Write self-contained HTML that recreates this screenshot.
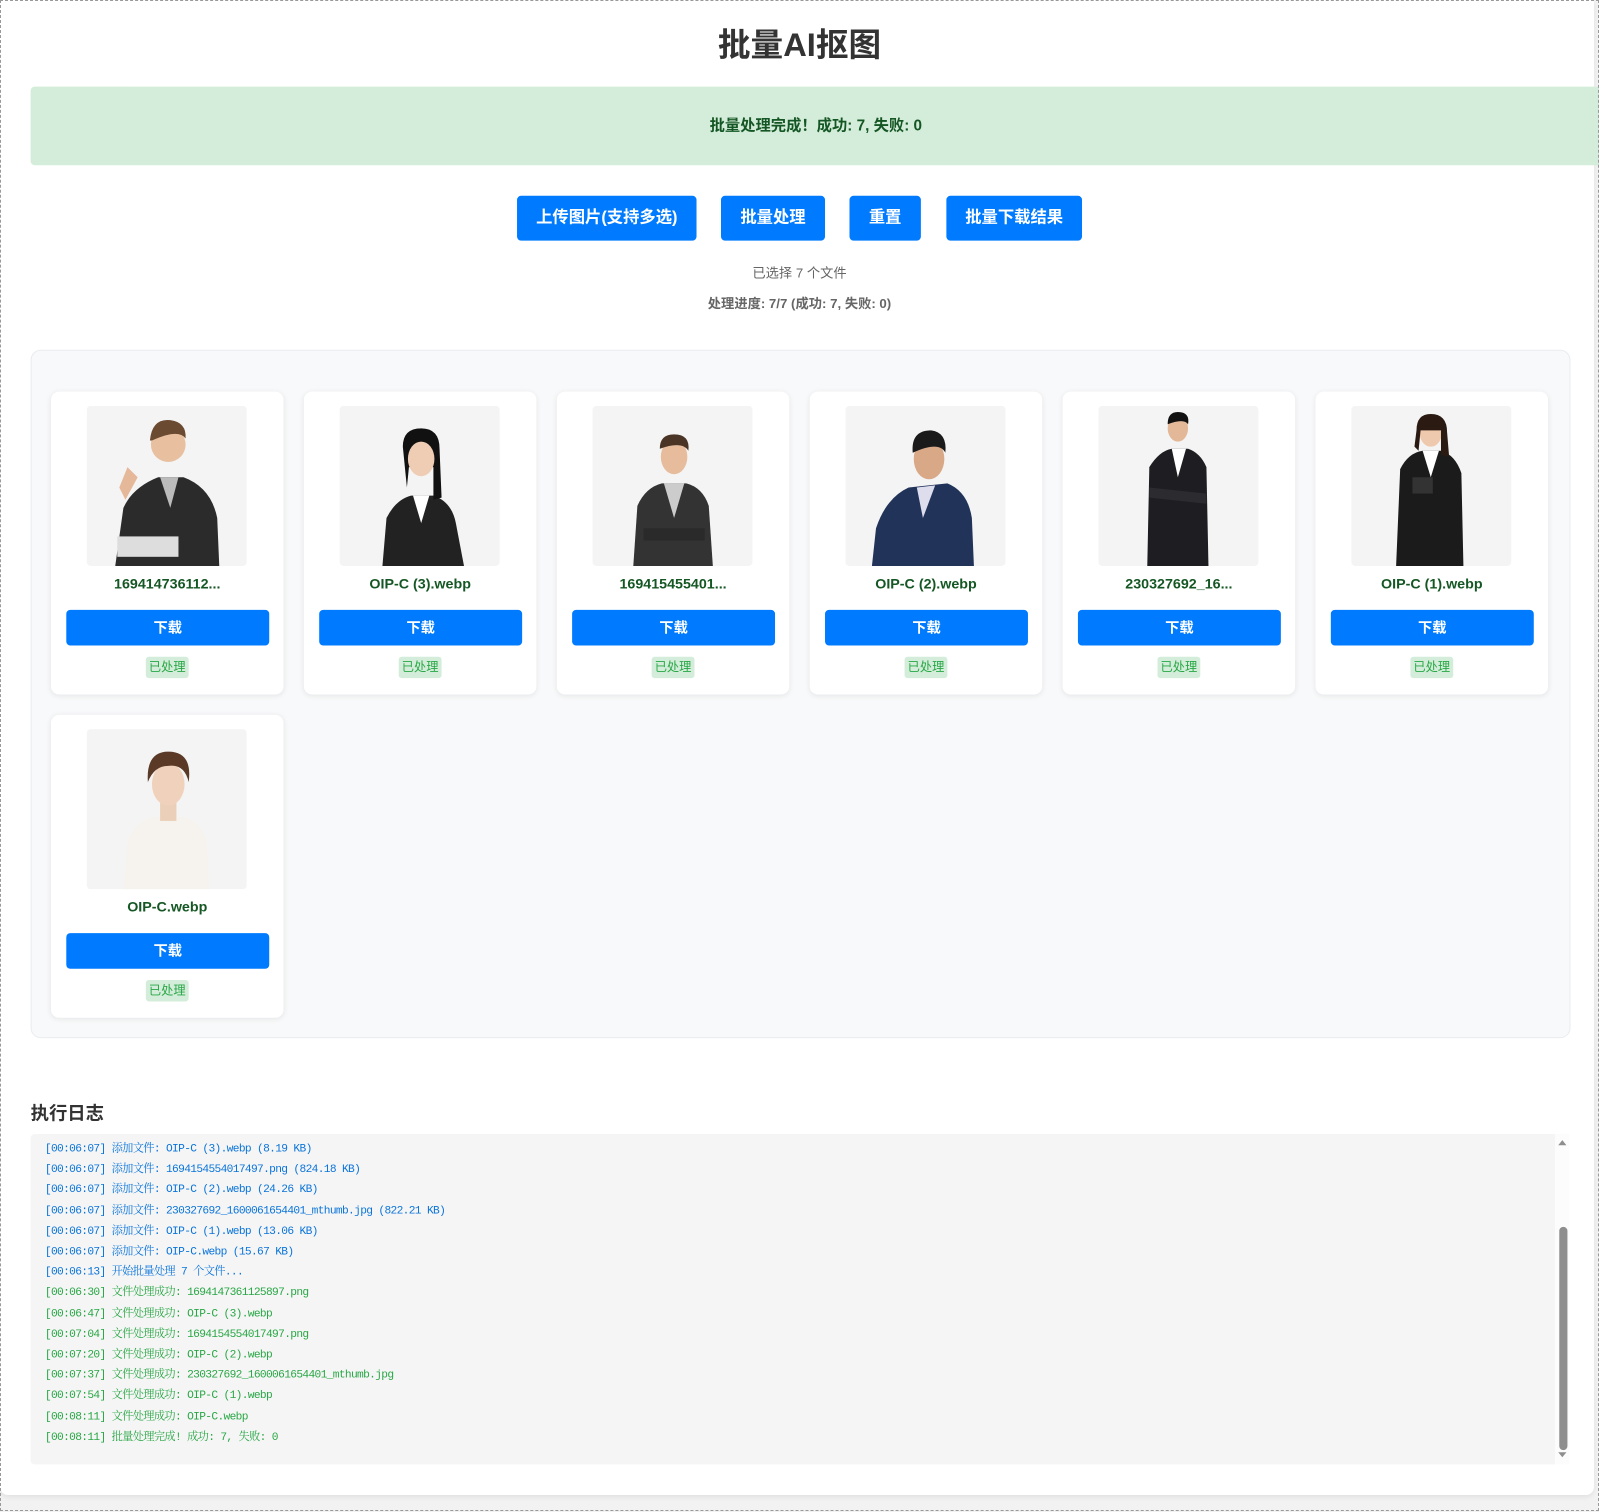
<!DOCTYPE html>
<html><head><meta charset="utf-8"><style>
*{box-sizing:border-box;margin:0;padding:0}
body{width:1599px;height:1512px;background:#f2f2f2;font-family:"Liberation Sans","Noto Sans CJK SC",sans-serif;position:relative;overflow:hidden}
.frame{position:absolute;left:0;top:0;width:1599px;height:1511px;border:1px dashed #999;pointer-events:none;z-index:5}
.page{position:absolute;left:0;top:0;width:1594px;height:1495px;background:#fff;border-radius:0 0 8px 8px;box-shadow:0 2px 6px rgba(0,0,0,.08)}
.wrap{position:absolute;left:0;top:0;width:1568px;height:1482px;transform:scale(1.0198);transform-origin:0 0}
h1{position:absolute;left:0;width:1568px;top:24px;text-align:center;font-size:32px;font-weight:bold;color:#333;line-height:40px}
.banner{position:absolute;left:30px;top:85px;width:1540px;height:77px;background:#d4edda;border-radius:4px 0 0 4px;text-align:center;line-height:77px;font-size:15px;font-weight:bold;color:#155724}
.btn{position:absolute;top:192px;height:44px;background:#007bff;color:#fff;border-radius:4px;font-size:16px;font-weight:bold;text-align:center;line-height:44px}
.info{position:absolute;left:0;width:1568px;text-align:center;font-size:13px;color:#666}
.grid{position:absolute;left:30px;top:343px;width:1510px;height:675px;background:#f8f9fa;border:1px solid #e9ecef;border-radius:10px}
.card{position:absolute;width:228px;height:297px;background:#fff;border-radius:8px;box-shadow:0 1px 5px rgba(0,0,0,.08)}
.card svg{position:absolute;left:35px;top:14px;width:157px;height:157px;border-radius:4px}
.card .nm{position:absolute;left:0;width:228px;top:180px;text-align:center;font-size:14px;font-weight:bold;color:#155724}
.card .dl{position:absolute;left:15px;top:214px;width:199px;height:35px;background:#007bff;border-radius:4px;color:#fff;text-align:center;line-height:35px;font-size:14px;font-weight:bold}
.card .bd{position:absolute;left:93px;top:260px;width:42px;height:21px;background:#d4edda;border-radius:3px;color:#28a745;font-size:12px;text-align:center;line-height:21px}
h2{position:absolute;left:30px;top:1078px;font-size:18px;font-weight:bold;color:#333}
.log{position:absolute;left:30px;top:1112px;width:1495px;height:324px;background:#f5f5f5;border-radius:4px 0 0 4px;padding:5px 14px;font-family:"Liberation Mono","Noto Serif CJK SC",monospace;font-size:11px;line-height:20.2px;letter-spacing:-0.65px}
.log .b{color:#0a74da}.log .g{color:#28a745}
.sb{position:absolute;left:1525px;top:1112px;width:14px;height:324px;background:#fcfcfc}
.thumb{position:absolute;left:1529px;top:1203px;width:8px;height:219px;background:#8e8e8e;border-radius:4px}
</style></head><body>
<div class="page"></div>
<div class="wrap">
<h1>批量AI抠图</h1>
<div class="banner">批量处理完成！成功: 7, 失败: 0</div>
<div class="btn" style="left:507px;width:176px">上传图片(支持多选)</div>
<div class="btn" style="left:707px;width:102px">批量处理</div>
<div class="btn" style="left:833px;width:70px">重置</div>
<div class="btn" style="left:928px;width:133px">批量下载结果</div>
<div class="info" style="top:257px">已选择 7 个文件</div>
<div class="info" style="top:287px;font-weight:bold">处理进度: 7/7 (成功: 7, 失败: 0)</div>
<div class="grid"></div>

<div class="card" style="left:50px;top:384px"><svg viewBox="0 0 157 157"><rect width="157" height="157" fill="#f4f4f4"/><path d="M28 157 L36 100 Q45 80 70 70 L95 70 Q122 80 128 110 L130 157Z" fill="#2b2b2b"/><rect x="30" y="128" width="60" height="20" fill="#ddd"/><path d="M40 60 L32 80 L38 92 L50 70Z" fill="#e4b898"/><path d="M72 70 L82 100 L90 70Z" fill="#bbb"/><circle cx="80" cy="38" r="17" fill="#e8c0a0"/><path d="M62 34 Q64 12 82 14 Q98 16 97 32 Q90 22 64 34Z" fill="#6b4a32"/></svg><div class="nm">169414736112...</div><div class="dl">下载</div><div class="bd">已处理</div></div>

<div class="card" style="left:298px;top:384px"><svg viewBox="0 0 157 157"><rect width="157" height="157" fill="#f4f4f4"/><path d="M42 157 L46 110 Q55 92 70 88 L92 88 Q110 94 114 115 L122 157Z" fill="#222"/><path d="M72 88 L80 115 L88 88Z" fill="#fff"/><path d="M62 40 Q62 22 80 22 Q98 22 98 42 L100 90 L92 92 L92 60 L68 60 L66 80Z" fill="#111"/><ellipse cx="80" cy="52" rx="13" ry="17" fill="#efcdb4"/></svg><div class="nm">OIP-C (3).webp</div><div class="dl">下载</div><div class="bd">已处理</div></div>

<div class="card" style="left:546px;top:384px"><svg viewBox="0 0 157 157"><rect width="157" height="157" fill="#f4f4f4"/><path d="M40 157 L44 98 Q52 80 68 76 L92 76 Q108 80 114 98 L118 157Z" fill="#333"/><path d="M70 76 L80 110 L90 76Z" fill="#ccc"/><path d="M50 120 L110 120 L110 132 L50 132Z" fill="#2a2a2a"/><ellipse cx="80" cy="50" rx="13" ry="17" fill="#e6bc9c"/><path d="M66 42 Q66 28 80 28 Q96 28 94 44 Q88 34 66 42Z" fill="#4a3426"/></svg><div class="nm">169415455401...</div><div class="dl">下载</div><div class="bd">已处理</div></div>

<div class="card" style="left:794px;top:384px"><svg viewBox="0 0 157 157"><rect width="157" height="157" fill="#f4f4f4"/><path d="M26 157 L30 120 Q40 90 62 80 L100 76 Q120 84 124 110 L126 157Z" fill="#22335a"/><path d="M70 80 L76 110 L88 78Z" fill="#dde"/><ellipse cx="82" cy="52" rx="15" ry="20" fill="#d9a886"/><path d="M66 46 Q64 24 84 24 Q100 26 98 46 Q92 34 66 46Z" fill="#1a1a1a"/></svg><div class="nm">OIP-C (2).webp</div><div class="dl">下载</div><div class="bd">已处理</div></div>

<div class="card" style="left:1042px;top:384px"><svg viewBox="0 0 157 157"><rect width="157" height="157" fill="#f4f4f4"/><path d="M48 157 L50 60 Q60 44 72 42 L88 42 Q100 46 106 60 L108 157Z" fill="#1e1e22"/><path d="M72 42 L78 70 L86 42Z" fill="#fff"/><path d="M50 80 L106 86 L106 96 L50 90Z" fill="#2c2c30"/><ellipse cx="78" cy="22" rx="10" ry="13" fill="#e2b898"/><path d="M68 18 Q68 6 78 6 Q90 6 88 18 Q84 12 68 18Z" fill="#111"/></svg><div class="nm">230327692_16...</div><div class="dl">下载</div><div class="bd">已处理</div></div>

<div class="card" style="left:1290px;top:384px"><svg viewBox="0 0 157 157"><rect width="157" height="157" fill="#f4f4f4"/><path d="M44 157 L48 62 Q56 46 70 44 L88 44 Q102 48 108 66 L110 157Z" fill="#1b1b1b"/><path d="M70 44 L78 70 L86 44Z" fill="#fff"/><rect x="60" y="70" width="20" height="16" fill="#333"/><ellipse cx="78" cy="26" rx="11" ry="14" fill="#efc9ae"/><path d="M64 24 Q64 8 78 8 Q94 8 94 26 L96 50 L88 48 L88 24 L68 24 L66 44 L62 40Z" fill="#2a1a12"/></svg><div class="nm">OIP-C (1).webp</div><div class="dl">下载</div><div class="bd">已处理</div></div>

<div class="card" style="left:50px;top:701px"><svg viewBox="0 0 157 157"><rect width="157" height="157" fill="#f4f4f4"/><path d="M36 157 L40 110 Q48 90 66 86 L94 86 Q112 90 118 110 L120 157Z" fill="#f6f3ee"/><rect x="72" y="72" width="16" height="18" fill="#eccfb8"/><ellipse cx="80" cy="54" rx="16" ry="21" fill="#f0d2bc"/><path d="M60 52 Q58 22 80 22 Q104 22 100 52 Q96 34 80 36 Q66 36 60 52Z" fill="#5a3a26"/></svg><div class="nm">OIP-C.webp</div><div class="dl">下载</div><div class="bd">已处理</div></div>

<h2>执行日志</h2>
<div class="log">
<div class="b">[00:06:07] 添加文件: OIP-C (3).webp (8.19 KB)</div>
<div class="b">[00:06:07] 添加文件: 1694154554017497.png (824.18 KB)</div>
<div class="b">[00:06:07] 添加文件: OIP-C (2).webp (24.26 KB)</div>
<div class="b">[00:06:07] 添加文件: 230327692_1600061654401_mthumb.jpg (822.21 KB)</div>
<div class="b">[00:06:07] 添加文件: OIP-C (1).webp (13.06 KB)</div>
<div class="b">[00:06:07] 添加文件: OIP-C.webp (15.67 KB)</div>
<div class="b">[00:06:13] 开始批量处理 7 个文件...</div>
<div class="g">[00:06:30] 文件处理成功: 1694147361125897.png</div>
<div class="g">[00:06:47] 文件处理成功: OIP-C (3).webp</div>
<div class="g">[00:07:04] 文件处理成功: 1694154554017497.png</div>
<div class="g">[00:07:20] 文件处理成功: OIP-C (2).webp</div>
<div class="g">[00:07:37] 文件处理成功: 230327692_1600061654401_mthumb.jpg</div>
<div class="g">[00:07:54] 文件处理成功: OIP-C (1).webp</div>
<div class="g">[00:08:11] 文件处理成功: OIP-C.webp</div>
<div class="g">[00:08:11] 批量处理完成! 成功: 7, 失败: 0</div>
</div>
<div class="sb"><div style="position:absolute;left:3px;top:6px;border:4px solid transparent;border-bottom:5px solid #8e8e8e;border-top:0"></div><div style="position:absolute;left:3px;top:312px;border:4px solid transparent;border-top:5px solid #8e8e8e;border-bottom:0"></div></div>
<div class="thumb"></div>
</div>
<div class="frame"></div>
</body></html>
